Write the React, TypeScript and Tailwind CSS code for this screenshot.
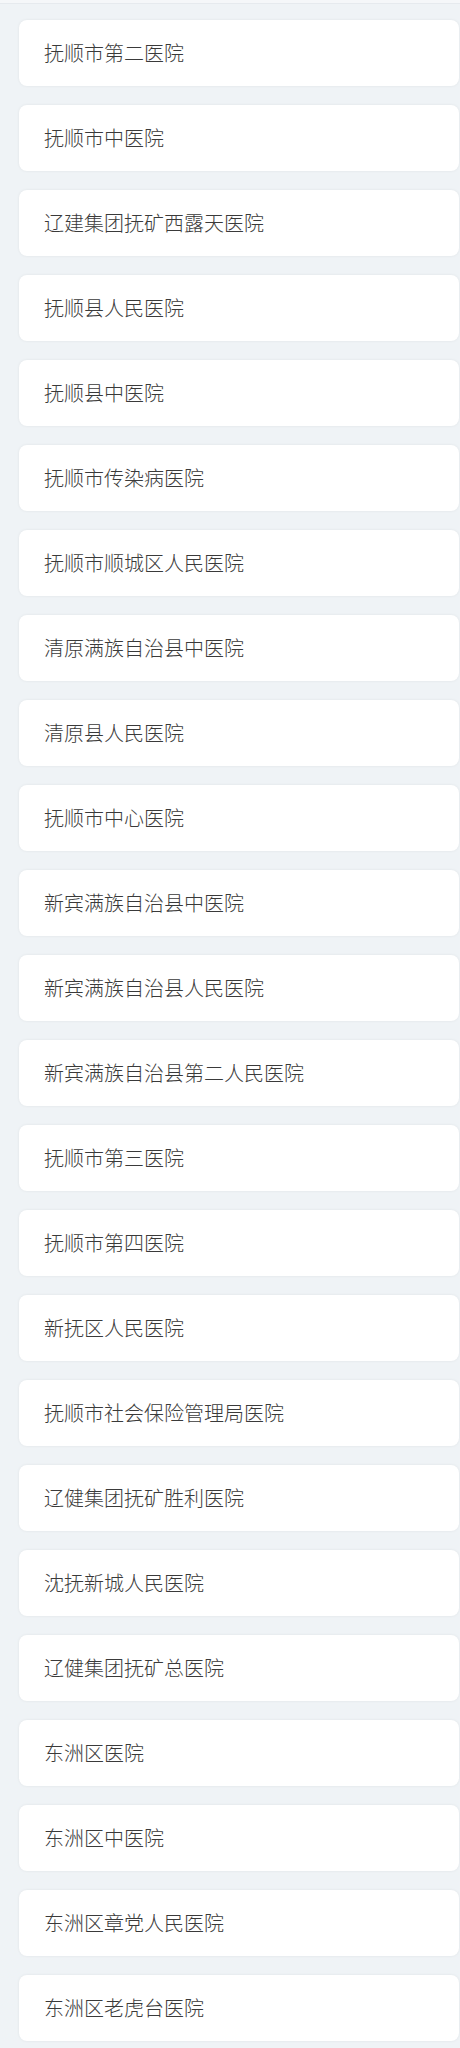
const hospitals = [
  "抚顺市第二医院",
  "抚顺市中医院",
  "辽建集团抚矿西露天医院",
  "抚顺县人民医院",
  "抚顺县中医院",
  "抚顺市传染病医院",
  "抚顺市顺城区人民医院",
  "清原满族自治县中医院",
  "清原县人民医院",
  "抚顺市中心医院",
  "新宾满族自治县中医院",
  "新宾满族自治县人民医院",
  "新宾满族自治县第二人民医院",
  "抚顺市第三医院",
  "抚顺市第四医院",
  "新抚区人民医院",
  "抚顺市社会保险管理局医院",
  "辽健集团抚矿胜利医院",
  "沈抚新城人民医院",
  "辽健集团抚矿总医院",
  "东洲区医院",
  "东洲区中医院",
  "东洲区章党人民医院",
  "东洲区老虎台医院",
];

export default function App() {
  return (
    <div className="min-h-screen w-[460px] bg-[#eff3f6] font-['Noto_Sans_CJK_SC','Noto_Sans',sans-serif]">
      {/* top strip */}
      <div className="h-[4px] bg-[#f5f7f9] border-b border-[#e6eaee]" />
      <ul className="flex flex-col gap-[19px] pt-[16px] pb-[8px] pl-[19px] pr-[1px]">
        {hospitals.map((name) => (
          <li
            key={name}
            className="h-[66px] flex items-center px-[25px] bg-white rounded-[8px] shadow-[0_0_3px_rgba(0,0,0,0.07)] text-[20px] font-light text-[#3a3a3a] leading-none"
          >
            {name}
          </li>
        ))}
      </ul>
    </div>
  );
}
